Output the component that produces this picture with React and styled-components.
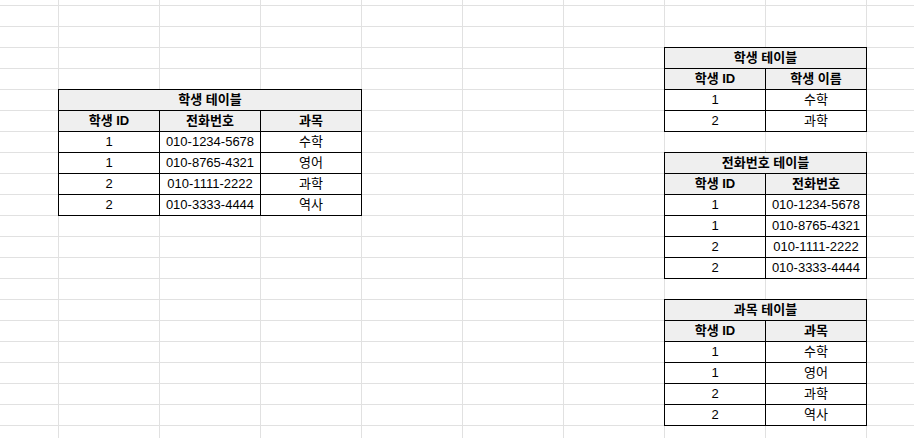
import React from 'react';
import styled, { createGlobalStyle } from 'styled-components';

const GlobalStyle = createGlobalStyle`
  html, body {
    margin: 0;
    padding: 0;
    background: #ffffff;
  }
`;

const Sheet = styled.div`
  width: 914px;
  height: 438px;
  overflow: hidden;
  display: grid;
  grid-template-columns: 58px repeat(9, 101px);
  grid-template-rows: 5px repeat(21, 21px);
  background-color: #ffffff;
  background-image: linear-gradient(to right, #e1e1e1 1px, transparent 1px),
    linear-gradient(to bottom, #e1e1e1 1px, transparent 1px);
  background-size: 101px 21px;
  background-position: 58px 5px;
  font-family: 'Liberation Sans', 'Noto Sans CJK KR', Arial, sans-serif;
  font-size: 13px;
  color: #000000;
`;

const Table = styled.div`
  grid-column: ${(p) => p.$col} / span ${(p) => p.$cols};
  grid-row: ${(p) => p.$row} / span ${(p) => p.$rows};
  width: ${(p) => p.$cols * 101 + 1}px;
  height: ${(p) => p.$rows * 21 + 1}px;
  display: grid;
  grid-template-columns: repeat(${(p) => p.$cols}, 101px);
  grid-auto-rows: 21px;
  box-sizing: border-box;
  border-top: 1px solid #000000;
  border-left: 1px solid #000000;
  align-self: start;
  position: relative;
  z-index: 1;
`;

const Cell = styled.div`
  box-sizing: border-box;
  border-right: 1px solid #000000;
  border-bottom: 1px solid #000000;
  background: ${(p) => (p.$head ? '#efefef' : '#ffffff')};
  font-weight: ${(p) => (p.$head ? 700 : 400)};
  line-height: 20px;
  text-align: center;
  white-space: nowrap;
  overflow: hidden;
`;

const Title = styled(Cell)`
  grid-column: 1 / -1;
`;

function DataTable({ title, columns, rows, col, row }) {
  return (
    <Table $col={col} $cols={columns.length} $row={row} $rows={rows.length + 2}>
      <Title $head>{title}</Title>
      {columns.map((c) => (
        <Cell $head key={c}>
          {c}
        </Cell>
      ))}
      {rows.map((r, i) => r.map((v, j) => <Cell key={`${i}-${j}`}>{v}</Cell>))}
    </Table>
  );
}

const studentRows = [
  ['1', '010-1234-5678', '수학'],
  ['1', '010-8765-4321', '영어'],
  ['2', '010-1111-2222', '과학'],
  ['2', '010-3333-4444', '역사'],
];

export default function App() {
  return (
    <>
      <GlobalStyle />
      <Sheet>
        <DataTable title="학생 테이블" columns={['학생 ID', '전화번호', '과목']} rows={studentRows} col={2} row={6} />
        <DataTable
          title="학생 테이블"
          columns={['학생 ID', '학생 이름']}
          rows={[
            ['1', '수학'],
            ['2', '과학'],
          ]}
          col={8}
          row={4}
        />
        <DataTable
          title="전화번호 테이블"
          columns={['학생 ID', '전화번호']}
          rows={studentRows.map((r) => [r[0], r[1]])}
          col={8}
          row={9}
        />
        <DataTable
          title="과목 테이블"
          columns={['학생 ID', '과목']}
          rows={studentRows.map((r) => [r[0], r[2]])}
          col={8}
          row={16}
        />
      </Sheet>
    </>
  );
}
